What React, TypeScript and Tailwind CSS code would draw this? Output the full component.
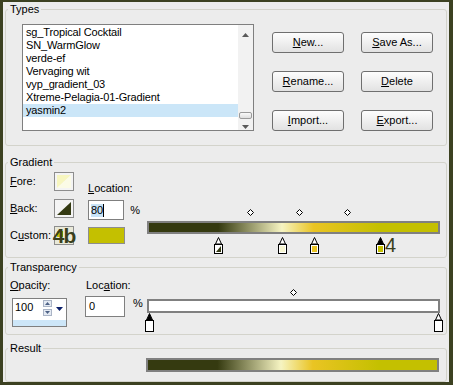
import React from "react";

const FONT = "font-['Liberation_Sans',Arial,sans-serif]";

const TYPES = [
  "sg_Tropical Cocktail",
  "SN_WarmGlow",
  "verde-ef",
  "Vervaging wit",
  "vyp_gradient_03",
  "Xtreme-Pelagia-01-Gradient",
  "yasmin2",
];

const Btn = ({ k, rest }: { k: string; rest: string }) => (
  <div className="w-[72px] h-[21px] rounded-[3px] border border-[#6f6f6f] bg-gradient-to-b from-[#fdfdfd] to-[#e2e2e2] flex items-center justify-center leading-none">
    <span className="underline">{k}</span>
    {rest}
  </div>
);

const Diamond = ({ x }: { x: number }) => (
  <svg className="absolute top-0" style={{ left: x - 3 }} width="7" height="7" viewBox="0 0 7 7">
    <path d="M3.5 0.5 L6.5 3.5 L3.5 6.5 L0.5 3.5 Z" fill="#fff" stroke="#000" />
  </svg>
);

const Stop = ({
  x,
  top = "#fff",
  body,
  tall = false,
}: {
  x: number;
  top?: string;
  body: React.ReactNode;
  tall?: boolean;
}) => {
  const h = tall ? 19 : 17;
  return (
    <svg className="absolute top-0" style={{ left: x - 4 }} width="9" height={h} viewBox={`0 0 9 ${h}`}>
      <path d="M4.5 0.5 L7.5 7 L1.5 7 Z" fill={top} stroke="#000" />
      <rect x="0.5" y="7.5" width="8" height={h - 8} fill="#fff" stroke="#000" />
      {body}
    </svg>
  );
};

const Swatch = ({ children }: { children?: React.ReactNode }) => (
  <div className="w-[20px] h-[19px] border border-[#8d8d8d] bg-[#f4f4f4] p-[2px] relative">{children}</div>
);

export default function App() {
  return (
    <div
      className={`w-[453px] h-[385px] bg-[#ececec] border-t-2 border-l-[3px] border-r-4 border-b-[3px] border-[#3c4121] ${FONT} text-[11px] text-black overflow-hidden flex flex-col`}
    >
      {/* Types */}
      <fieldset className="mx-[2px] h-[144px] border border-[#d3d3cb] rounded-[3px] pt-[8px]">
        <legend className="ml-[2px] px-[2px] leading-[14px]">Types</legend>
        <div className="flex pl-[16px]">
          <div className="w-[232px] h-[107px] border border-[#7f7f7f] bg-white flex">
            <div className="flex-1 pt-[1px]">
              {TYPES.map((t) => (
                <div
                  key={t}
                  className={`h-[13px] leading-[13px] pl-[3px] tracking-[-0.15px] ${t === "yasmin2" ? "bg-[#cbe6f8]" : ""}`}
                >
                  {t}
                </div>
              ))}
            </div>
            <div className="w-[15px] h-full bg-[#f2f2f2] flex flex-col items-center">
              <svg className="mt-[8px]" width="7" height="4" viewBox="0 0 7 4">
                <path d="M0 4 L3.5 0 L7 4 Z" fill="#5a5a5a" />
              </svg>
              <div className="mt-[75px] w-[13px] h-[7px] rounded-[2px] border border-[#9a9a9a] bg-gradient-to-b from-[#fafafa] to-[#dedede]" />
              <svg className="mt-[6px]" width="7" height="4" viewBox="0 0 7 4">
                <path d="M0 0 L7 0 L3.5 4 Z" fill="#5a5a5a" />
              </svg>
            </div>
          </div>
          <div className="ml-[18px] mt-[8px] grid grid-cols-[72px_72px] gap-x-[17px] gap-y-[18px] h-fit">
            <Btn k="N" rest="ew..." />
            <Btn k="S" rest="ave As..." />
            <Btn k="R" rest="ename..." />
            <Btn k="D" rest="elete" />
            <Btn k="I" rest="mport..." />
            <Btn k="E" rest="xport..." />
          </div>
        </div>
      </fieldset>

      {/* Gradient */}
      <fieldset className="mx-[2px] mt-[9px] h-[103px] border border-[#d3d3cb] rounded-[3px]">
        <legend className="ml-[2px] px-[2px] leading-[14px]">Gradient</legend>
        <div className="flex pl-[4px]">
          <div className="pt-[3px] flex flex-col gap-[8px]">
            <div className="flex items-center h-[19px]">
              <div className="w-[44px]">
                <span className="underline">F</span>ore:
              </div>
              <Swatch>
                <svg width="14" height="13" viewBox="0 0 14 13">
                  <path d="M0 0 L14 0 L0 13 Z" fill="#f7f6bf" />
                  <path d="M14 0 L14 13 L0 13 Z" fill="#fbfbe6" />
                </svg>
              </Swatch>
            </div>
            <div className="flex items-center h-[19px]">
              <div className="w-[44px]">
                <span className="underline">B</span>ack:
              </div>
              <Swatch>
                <svg width="14" height="13" viewBox="0 0 14 13">
                  <path d="M14 0 L14 13 L0 13 Z" fill="#343a12" />
                </svg>
              </Swatch>
            </div>
            <div className="flex items-center h-[19px]">
              <div className="w-[44px]">
                C<span className="underline">u</span>stom:
              </div>
              <div className="w-[20px] h-[19px] border border-[#8d8d8d] bg-[#e9e9d8] flex items-center justify-center overflow-visible">
                <span className="text-[21px] leading-none font-bold text-[#3a3f1c] tracking-[-1px] bg-[linear-gradient(to_bottom,#c4c000,#c4c000)] bg-[length:6px_6px] bg-[position:4px_6px] bg-no-repeat">
                  4b
                </span>
              </div>
            </div>
          </div>

          <div className="ml-[14px] w-[52px]">
            <div className="mt-[12px] h-[14px] leading-[14px]">
              <span className="underline">L</span>ocation:
            </div>
            <div className="mt-[5px] flex items-center">
              <div className="w-[38px] h-[20px] border border-[#7f7f7f] bg-white flex items-center pl-[2px]">
                <span className="bg-[#c8e3f7] leading-[13px]">80</span>
                <span className="w-[1px] h-[13px] bg-black" />
              </div>
              <span className="ml-[6px]">%</span>
            </div>
            <div className="mt-[7px] w-[37px] h-[17px] border border-[#8d8d8d] bg-[#c4c000]" />
          </div>

          <div className="ml-[7px] w-[293px] pt-[40px]">
            <div className="relative h-[10px]">
              <Diamond x={103} />
              <Diamond x={152} />
              <Diamond x={200} />
            </div>
            <div className="mt-[2px] h-[13px] border-2 border-[#808080] bg-[linear-gradient(to_right,#353a10_0%,#353a10_24%,#f6f4c2_46%,#eac423_57%,#c4c000_80%,#c4c000_100%)]" />
            <div className="mt-[3px] h-[17px] relative">
              <Stop x={71} body={<path d="M7 9 L7 15 L2 15 Z" fill="#343a12" />} />
              <Stop x={135} body={<rect x="2" y="9" width="5" height="6" fill="#f7f6d2" />} />
              <Stop x={167} body={<rect x="2" y="9" width="5" height="6" fill="#eac423" />} />
              <Stop x={233} top="#000" body={<rect x="2" y="9" width="5" height="6" fill="#c4c000" />} />
              <span className="absolute left-[238px] top-[-2px] text-[20px] leading-none text-[#3a3f1c]">4</span>
            </div>
          </div>
        </div>
      </fieldset>

      {/* Transparency */}
      <fieldset className="mx-[2px] mt-[2px] h-[75px] border border-[#d3d3cb] rounded-[3px]">
        <legend className="ml-[2px] px-[2px] leading-[14px]">Transparency</legend>
        <div className="flex pl-[4px]">
          <div className="w-[75px]">
            <div className="mt-[4px] h-[14px] leading-[14px]">
              <span className="underline">O</span>pacity:
            </div>
            <div className="ml-[2px] mt-[6px] w-[55px] h-[29px] border border-[#7f7f7f] bg-white flex flex-col">
              <div className="flex-1 flex items-start">
                <span className="ml-[2px] mt-[2px] leading-[13px]">100</span>
                <div className="ml-[10px] mt-[1px] flex flex-col gap-[2px]">
                  <div className="w-[9px] h-[7px] border border-[#aab4c6] bg-[#e4eaf3] flex items-center justify-center">
                    <svg width="5" height="3" viewBox="0 0 5 3">
                      <path d="M0 3 L2.5 0 L5 3 Z" fill="#4d6185" />
                    </svg>
                  </div>
                  <div className="w-[9px] h-[7px] border border-[#aab4c6] bg-[#e4eaf3] flex items-center justify-center">
                    <svg width="5" height="3" viewBox="0 0 5 3">
                      <path d="M0 0 L5 0 L2.5 3 Z" fill="#4d6185" />
                    </svg>
                  </div>
                </div>
                <svg className="ml-[4px] mt-[8px]" width="7" height="4" viewBox="0 0 7 4">
                  <path d="M0 0 L7 0 L3.5 4 Z" fill="#0a1f6b" />
                </svg>
              </div>
              <div className="h-[6px] bg-[#cde6f8]" />
            </div>
          </div>

          <div className="w-[62px]">
            <div className="mt-[4px] h-[14px] leading-[14px] pl-[1px]">
              Loc<span className="underline">a</span>tion:
            </div>
            <div className="mt-[4px] flex items-center">
              <div className="w-[40px] h-[21px] border border-[#7f7f7f] bg-white flex items-center pl-[3px]">0</div>
              <span className="ml-[8px] -mt-[6px]">%</span>
            </div>
          </div>

          <div className="w-[293px]">
            <div className="mt-[15px] relative h-[8px]">
              <Diamond x={146} />
            </div>
            <div className="mt-[2px] h-[14px] border-2 border-[#808080] bg-white" />
            <div className="h-[19px] relative">
              <Stop x={2} top="#000" tall body={null} />
              <Stop x={291} tall body={null} />
            </div>
          </div>
        </div>
      </fieldset>

      {/* Result */}
      <fieldset className="mx-[2px] mt-[6px] flex-1 border border-[#d3d3cb] rounded-[3px]">
        <legend className="ml-[2px] px-[2px] leading-[14px]">Result</legend>
        <div className="ml-[140px] mt-[3px] w-[293px] h-[14px] border-2 border-[#808080] bg-[linear-gradient(to_right,#353a10_0%,#353a10_24%,#f6f4c2_46%,#eac423_57%,#c4c000_80%,#c4c000_100%)]" />
      </fieldset>
    </div>
  );
}
